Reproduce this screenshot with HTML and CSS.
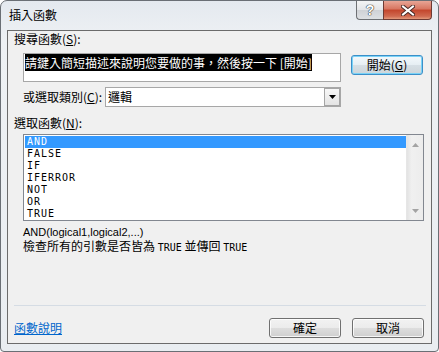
FILE: index.html
```html
<!DOCTYPE html>
<html>
<head>
    <meta charset="utf-8">
    <title>插入函數</title>
    <link rel="stylesheet" href="styles.css">
</head>
<body>
    <div class="window">
        <div class="titlebar">
            <span class="title">插入函數</span>
            <div class="caption">
                <button class="cap help">?</button>
                <button class="cap close">
                    <svg width="14" height="11" viewBox="0 0 14 11">
                        <path d="M2 1.5 L12 9.5 M12 1.5 L2 9.5" stroke="#4a2a26" stroke-width="4" stroke-linecap="square"/>
                        <path d="M2 1.5 L12 9.5 M12 1.5 L2 9.5" stroke="#fff" stroke-width="2" stroke-linecap="square"/>
                    </svg>
                </button>
            </div>
        </div>

        <div class="client">
            <div class="label top-label">搜尋函數(<u>S</u>):</div>

            <div class="search-row">
                <div class="search-box">
                    <span class="selected">請鍵入簡短描述來說明您要做的事，然後按一下 [開始]</span>
                </div>
                <button class="btn default">開始(<u>G</u>)</button>
            </div>

            <div class="cat-row">
                <span class="label cat-label">或選取類別(<u>C</u>):</span>
                <div class="select">
                    <span class="select-value">邏輯</span>
                    <span class="drop">
                        <svg width="7" height="4" viewBox="0 0 7 4"><path d="M0 0 H7 L3.5 4 Z" fill="#000"/></svg>
                    </span>
                </div>
            </div>

            <div class="label fn-label">選取函數(<u>N</u>):</div>

            <div class="listbox">
                <ul class="items">
                    <li class="active">AND</li>
                    <li>FALSE</li>
                    <li>IF</li>
                    <li>IFERROR</li>
                    <li>NOT</li>
                    <li>OR</li>
                    <li>TRUE</li>
                </ul>
                <div class="scrollbar">
                    <svg width="7" height="4" viewBox="0 0 7 4"><path d="M3.5 0 L7 4 H0 Z" fill="#a3a3a3"/></svg>
                    <svg width="7" height="4" viewBox="0 0 7 4"><path d="M0 0 H7 L3.5 4 Z" fill="#a3a3a3"/></svg>
                </div>
            </div>

            <div class="desc">
                <div class="syntax">AND(logical1,logical2,...)</div>
                <div class="summary">檢查所有的引數是否皆為 <span class="mono">TRUE</span> 並傳回 <span class="mono">TRUE</span></div>
            </div>

            <div class="separator"></div>

            <div class="footer">
                <a class="help-link" href="#">函數說明</a>
                <div class="buttons">
                    <button class="btn">確定</button>
                    <button class="btn">取消</button>
                </div>
            </div>
        </div>
    </div>
</body>
</html>
```

FILE: styles.css
```css
body {
    margin: 0;
    padding: 0;
    background-color: #ffffff;
    font-family: "Noto Sans CJK TC", "Noto Sans", sans-serif;
    font-size: 12px;
    color: #000;
}

.window {
    width: 439px;
    height: 352px;
    box-sizing: border-box;
    border: 1px solid #6a6f75;
    border-radius: 7px 7px 4px 4px;
    background: linear-gradient(#e4e9ef, #eef1f4 40px, #e9edf1);
    display: flex;
    flex-direction: column;
    overflow: hidden;
}

.titlebar {
    height: 29px;
    display: flex;
    align-items: flex-start;
    padding: 0 6px 0 8px;
}

.title {
    margin-top: 7px;
    line-height: 14px;
}

.caption {
    margin-left: auto;
    display: flex;
}

.cap {
    height: 19px;
    padding: 0;
    margin: 0;
    border: 1px solid #6d7074;
    border-top: none;
    font-family: "Liberation Sans", sans-serif;
}

.help {
    width: 27px;
    border-right: none;
    border-radius: 0 0 0 4px;
    background: linear-gradient(#f3f4f5, #e3e5e8 50%, #cfd2d6 51%, #dde0e3);
    font-size: 14px;
    font-weight: bold;
    color: #fff;
    line-height: 18px;
    text-shadow: 0 0 1px #333, 0 0 1px #333, 0 0 1px #333;
}

.close {
    width: 49px;
    border-color: #6e3a33;
    border-radius: 0 0 4px 0;
    background: linear-gradient(#e8a595, #d77560 45%, #c3452c 50%, #d06a50 85%, #e39a7c);
    display: flex;
    align-items: center;
    justify-content: center;
}

.client {
    flex: 1;
    margin: 0 6px 7px 6px;
    border: 1px solid #6b6b6b;
    background-color: #f0f0f0;
    display: flex;
    flex-direction: column;
}

.label {
    line-height: 14px;
}

u {
    text-decoration: underline;
    text-underline-offset: 1px;
}

.top-label {
    padding: 1px 0 0 6px;
}

.search-row {
    display: flex;
    align-items: flex-start;
    margin: 7px 0 0 15px;
}

.search-box {
    width: 318px;
    height: 29px;
    box-sizing: border-box;
    border: 1px solid #a7a7a7;
    background-color: #fff;
    padding: 2px 1px;
    line-height: 14px;
}

.selected {
    background-color: #000;
    color: #fff;
    white-space: nowrap;
}

.btn {
    width: 72px;
    height: 20px;
    padding: 0;
    box-sizing: border-box;
    border: 1px solid #707070;
    border-radius: 3px;
    background: linear-gradient(#f2f2f2, #ebebeb 50%, #dddddd 51%, #cfcfcf);
    box-shadow: inset 0 0 0 1px rgba(255, 255, 255, 0.8);
    font-family: "Noto Sans CJK TC", sans-serif;
    font-size: 12px;
    line-height: 16px;
    color: #000;
}

.default {
    margin: 2px 0 0 10px;
    border-color: #3c8fc8;
    box-shadow: inset 0 0 0 1px #7ad3f7;
    background: linear-gradient(#f4f9fc, #e6eef3 50%, #d6dfe5 51%, #cdd5da);
}

.cat-row {
    display: flex;
    align-items: center;
    margin: 5px 0 0 15px;
}

.cat-label {
    width: 82px;
}

.select {
    width: 236px;
    height: 20px;
    box-sizing: border-box;
    border: 1px solid #a7a7a7;
    background-color: #fff;
    display: flex;
    align-items: stretch;
}

.select-value {
    flex: 1;
    padding-left: 2px;
    line-height: 18px;
}

.drop {
    width: 16px;
    box-sizing: border-box;
    border: 1px solid #a5a5a5;
    background: linear-gradient(#f7f7f7, #e4e4e4);
    display: flex;
    align-items: center;
    justify-content: center;
}

.fn-label {
    margin: 9px 0 0 6px;
}

.listbox {
    width: 401px;
    height: 87px;
    box-sizing: border-box;
    margin: 4px 0 0 15px;
    border: 1px solid #828790;
    background-color: #fff;
    display: flex;
    padding: 1px 0 1px 1px;
}

.items {
    flex: 1;
    list-style: none;
    margin: 0;
    padding: 0;
    font-family: "DejaVu Sans Mono", monospace;
    font-size: 10px;
    letter-spacing: 1px;
    line-height: 12px;
}

.items li {
    padding-left: 2px;
    height: 12px;
}

.items .active {
    background-color: #3399ff;
    color: #fff;
}

.scrollbar {
    width: 17px;
    margin-top: -1px;
    margin-bottom: -1px;
    background: linear-gradient(90deg, #e3e3e3, #f0f0f0 30%, #ececec);
    border-left: 1px solid #e6e6e6;
    display: flex;
    flex-direction: column;
    justify-content: space-between;
    align-items: center;
    padding: 8px 0 7px;
    box-sizing: border-box;
}

.desc {
    margin: 5px 0 0 15px;
    line-height: 13px;
}

.syntax {
    font-family: "Liberation Sans", sans-serif;
    font-size: 11px;
}

.mono {
    font-family: "DejaVu Sans Mono", monospace;
    font-size: 10px;
}

.separator {
    margin: auto 5px 0 6px;
    height: 1px;
    background-color: #d5dce4;
}

.footer {
    display: flex;
    align-items: center;
    margin: 12px 7px 5px 6px;
}

.help-link {
    color: #0066cc;
    text-decoration: underline;
    line-height: 14px;
}

.buttons {
    margin-left: auto;
    display: flex;
    gap: 11px;
}
```
